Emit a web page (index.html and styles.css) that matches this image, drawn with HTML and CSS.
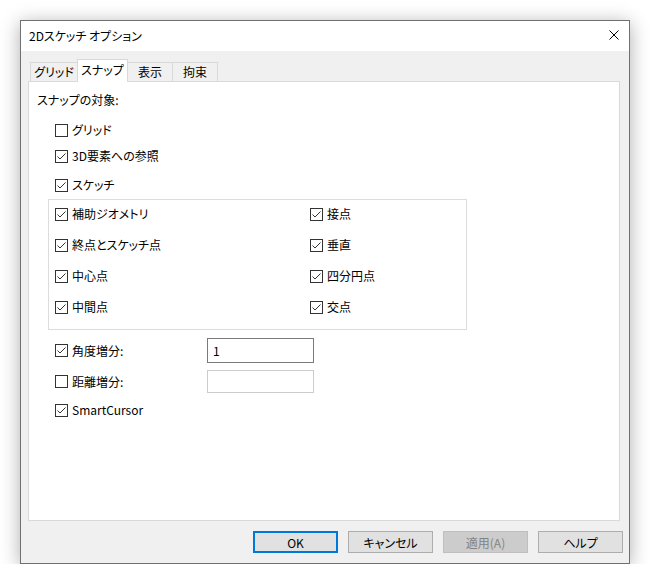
FILE: index.html
```html
<!DOCTYPE html>
<html lang="ja">
<head>
    <meta charset="UTF-8">
    <title>2Dスケッチ オプション</title>
    <link rel="stylesheet" href="styles.css">
</head>
<body>
    <div class="window">
        <div class="titlebar">
            <span class="title">2Dスケッチ オプション</span>
            <span class="close">
                <svg width="10" height="10" viewBox="0 0 10 10"><path d="M0.5 0.5L9.5 9.5M9.5 0.5L0.5 9.5" stroke="#000" stroke-width="1" fill="none"/></svg>
            </span>
        </div>

        <div class="client">
            <div class="tabs">
                <div class="tab">グリッド</div>
                <div class="tab active">スナップ</div>
                <div class="tab">表示</div>
                <div class="tab">拘束</div>
            </div>

            <div class="panel">
                <div class="caption">スナップの対象:</div>

                <label class="check row-grid"><span class="box"></span>グリッド</label>
                <label class="check row-3d"><span class="box on"></span>3D要素への参照</label>
                <label class="check row-sketch"><span class="box on"></span>スケッチ</label>

                <div class="group">
                    <label class="check"><span class="box on"></span>補助ジオメトリ</label>
                    <label class="check"><span class="box on"></span>接点</label>
                    <label class="check"><span class="box on"></span>終点とスケッチ点</label>
                    <label class="check"><span class="box on"></span>垂直</label>
                    <label class="check"><span class="box on"></span>中心点</label>
                    <label class="check"><span class="box on"></span>四分円点</label>
                    <label class="check"><span class="box on"></span>中間点</label>
                    <label class="check"><span class="box on"></span>交点</label>
                </div>

                <div class="field angle">
                    <label class="check"><span class="box on"></span>角度増分:</label>
                    <div class="input focused">1</div>
                </div>
                <div class="field dist">
                    <label class="check"><span class="box"></span>距離増分:</label>
                    <div class="input disabled"></div>
                </div>
                <label class="check row-smart"><span class="box on"></span>SmartCursor</label>
            </div>

            <div class="buttons">
                <button class="btn default">OK</button>
                <button class="btn">キャンセル</button>
                <button class="btn" disabled>適用(A)</button>
                <button class="btn">ヘルプ</button>
            </div>
        </div>
    </div>
</body>
</html>
```

FILE: styles.css
```css
* {
    margin: 0;
    padding: 0;
    box-sizing: border-box;
}

body {
    background: #fff;
    font-family: "Noto Sans CJK JP", "Noto Sans", sans-serif;
    font-size: 12px;
    font-feature-settings: "palt";
    color: #000;
}

.window {
    width: 610px;
    height: 544px;
    margin: 20px 0 0 20px;
    border: 1px solid #707070;
    background: #f0f0f0;
    box-shadow: 0 3px 18px rgba(0, 0, 0, 0.32);
    display: flex;
    flex-direction: column;
}

.titlebar {
    height: 30px;
    background: #fff;
    display: flex;
    align-items: center;
    justify-content: space-between;
    padding: 0 10px 0 8px;
}

.title {
    line-height: 16px;
}

.close {
    display: flex;
    width: 10px;
    height: 10px;
    margin-top: -2px;
}

.client {
    padding: 8px 6px 10px 7px;
}

/* tab strip */
.tabs {
    display: flex;
    align-items: flex-end;
    height: 22px;
    margin-left: 2px;
}

.tab {
    height: 19px;
    width: 46px;
    border: 1px solid #d9d9d9;
    border-bottom: none;
    margin-left: -1px;
    text-align: center;
    line-height: 18px;
    white-space: nowrap;
    background: #f0f0f0;
}

.tab:first-child {
    margin-left: 0;
    width: 48px;
}

.tab.active {
    height: 23px;
    width: 51px;
    background: #fff;
    margin-bottom: -1px;
    line-height: 20px;
    position: relative;
    z-index: 1;
}

.panel {
    width: 592px;
    height: 440px;
    background: #fff;
    border: 1px solid #d9d9d9;
    padding: 10px 0 0 0;
    display: flex;
    flex-direction: column;
    align-items: flex-start;
}

.caption {
    line-height: 16px;
    margin-left: 8px;
}

/* checkboxes */
.check {
    display: flex;
    align-items: center;
    height: 20px;
    line-height: 16px;
    white-space: nowrap;
}

.box {
    width: 13px;
    height: 13px;
    border: 1px solid #333;
    background: #fff;
    margin-right: 4px;
    flex: none;
}

.box.on {
    background: #fff url("data:image/svg+xml,%3Csvg xmlns='http://www.w3.org/2000/svg' width='11' height='11' viewBox='0 0 11 11'%3E%3Cpath d='M1.5 5.5L4 8L9.5 2.5' stroke='%23333' stroke-width='1' fill='none'/%3E%3C/svg%3E") no-repeat center;
}

.row-grid {
    margin: 12px 0 0 26px;
}

.row-3d {
    margin: 6px 0 0 26px;
}

.row-sketch {
    margin: 9px 0 0 26px;
}

.group {
    width: 419px;
    height: 131px;
    margin: 4px 0 0 19px;
    border: 1px solid #dcdcdc;
    padding: 4px 0 0 6px;
    display: grid;
    grid-template-columns: 255px 1fr;
    grid-auto-rows: 20px;
    row-gap: 11px;
}

.field {
    display: flex;
    align-items: center;
    margin-left: 26px;
}

.field .check {
    width: 152px;
}

.angle {
    margin-top: 8px;
}

.dist {
    margin-top: 7px;
}

.input {
    width: 107px;
    height: 25px;
    border: 1px solid #7a7a7a;
    background: #fff;
    padding: 0 5px;
    line-height: 23px;
}

.input.disabled {
    height: 23px;
    border-color: #cccccc;
}

.row-smart {
    margin: 7px 0 0 26px;
}

/* dialog buttons */
.buttons {
    display: flex;
    justify-content: flex-end;
    gap: 10px;
    margin-top: 10px;
}

.btn {
    width: 85px;
    height: 22px;
    font-family: inherit;
    font-size: 12px;
    font-feature-settings: "palt";
    color: #000;
    background: #e1e1e1;
    border: 1px solid #adadad;
}

.btn.default {
    border: 2px solid #0078d7;
}

.btn:disabled {
    background: #cccccc;
    border-color: #bfbfbf;
    color: #838383;
}
```
